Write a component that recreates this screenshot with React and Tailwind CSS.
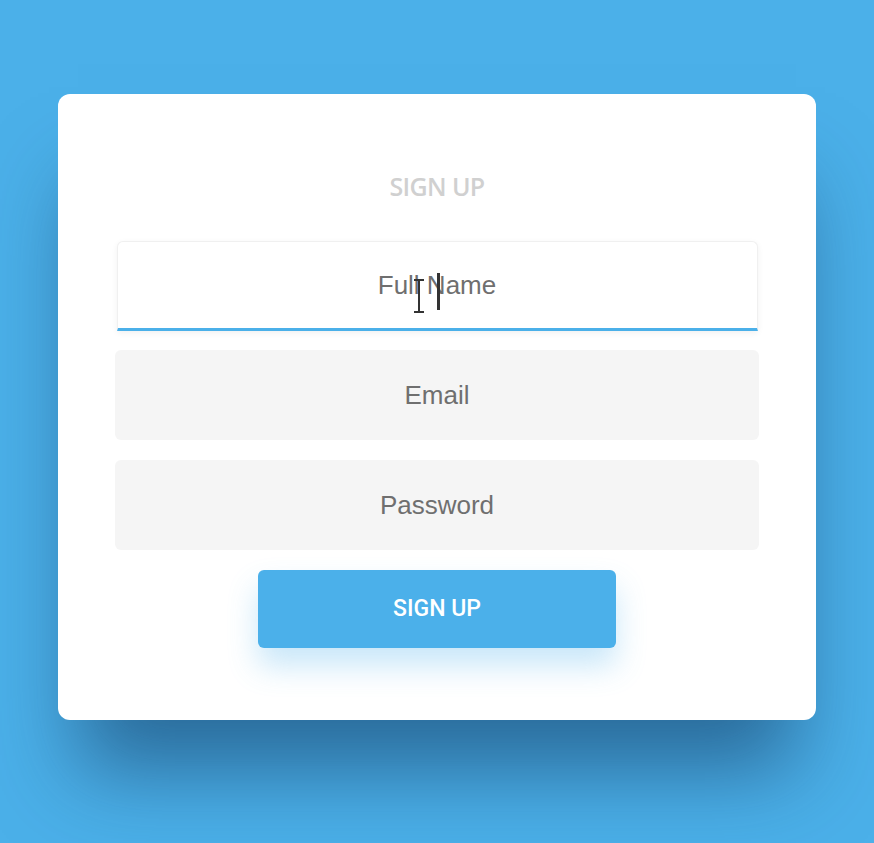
import { useState } from 'react';

const fieldBase =
  "w-full h-[90px] rounded-md text-center text-[26px] text-[#6f6f6f] placeholder:text-[#6f6f6f] outline-none font-['Liberation_Sans',Arial,sans-serif]";

export default function App() {
  const [form, setForm] = useState({ name: '', email: '', password: '' });

  const update = (key) => (e) => setForm({ ...form, [key]: e.target.value });

  return (
    <div className="min-h-[843px] w-full bg-[#4bb0e9] pt-[94px] px-[58px] overflow-hidden">
      <div className="w-[758px] h-[626px] bg-white rounded-xl shadow-[0_70px_80px_-20px_rgba(20,60,100,0.6)] pt-[74px] px-[57px] flex flex-col items-center">
        <h1 className="h-9 leading-9 text-[25px] font-semibold text-[#d0d0d0] font-['Open_Sans',sans-serif] tracking-tight">
          SIGN UP
        </h1>

        {/* focused field, with caret and mouse pointer */}
        <div className="relative w-[641px] mt-[37px]">
          <input
            value={form.name}
            onChange={update('name')}
            placeholder="Full Name"
            className={`${fieldBase} h-[89px] bg-white border border-[#f0f0f0] border-b-[3px] border-b-[#4bb0e9] rounded-b-none shadow-[0_2px_6px_rgba(0,0,0,0.06)]`}
          />
          <span className="absolute left-[320px] top-[32px] w-[3px] h-[37px] bg-[#333]" />
          <svg
            className="absolute left-[296px] top-[38px]"
            width="12"
            height="34"
            viewBox="0 0 12 34"
          >
            <path d="M1 1h10M6 1v32M1 33h10" stroke="#333" strokeWidth="2" fill="none" />
          </svg>
        </div>

        <input
          value={form.email}
          onChange={update('email')}
          placeholder="Email"
          className={`${fieldBase} mt-[19px] bg-[#f5f5f5]`}
        />
        <input
          type="password"
          value={form.password}
          onChange={update('password')}
          placeholder="Password"
          className={`${fieldBase} mt-5 bg-[#f5f5f5]`}
        />

        <button className="mt-5 w-[358px] h-[78px] rounded-md bg-[#4bb0ea] text-white text-[23px] font-medium font-['Roboto',sans-serif] shadow-[0_18px_30px_rgba(75,176,234,0.3)]">
          SIGN UP
        </button>
      </div>
    </div>
  );
}
